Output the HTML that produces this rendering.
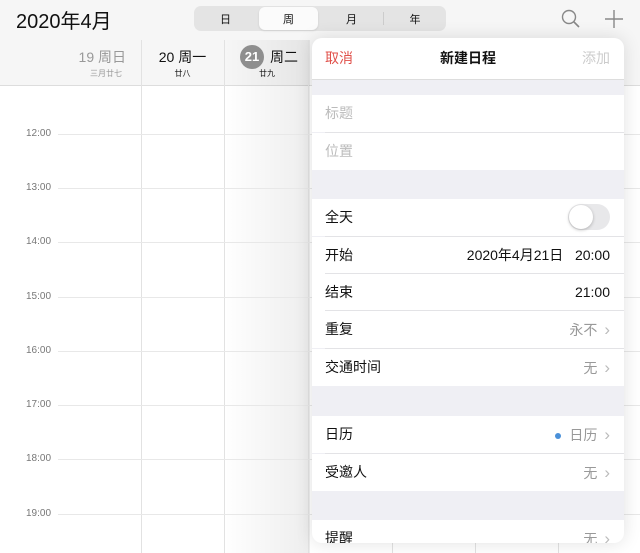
<!DOCTYPE html>
<html><head><meta charset="utf-8"><style>
*{margin:0;padding:0;box-sizing:border-box}
body{width:640px;height:553px;overflow:hidden;background:#fff;font-family:"Liberation Sans","Noto Sans CJK SC",sans-serif;position:relative;color:#111}
.abs{position:absolute}
.top{left:0;top:0;width:640px;height:86px;background:#f6f6f6;border-bottom:1px solid #ddd}
.vl{position:absolute;top:40px;bottom:0;width:1px;background:#e2e2e2}
.hl{position:absolute;left:58px;right:0;height:1px;background:#e8e8e8}
.tm{position:absolute;left:26px;font-size:10px;color:#777;width:30px}
.pop{left:312px;top:38px;width:312px;height:505px;background:#efeff4;border-radius:10px;overflow:hidden;box-shadow:0 0 18px rgba(0,0,0,.12)}
.row{position:absolute;left:0;width:312px;height:37px;background:#fff;font-size:14px;line-height:37px;padding-left:13px}
.row .r{position:absolute;right:14px;top:0;color:#999}
.row .r.b{color:#111}
.sep{position:absolute;left:13px;right:0;height:1px;background:#e3e3e6}
.chev{display:inline-block;margin-left:7px;color:#bbb;font-size:17px}
</style></head><body>
<div class="abs top"></div>
<div class="abs" style="left:16px;top:5px;font-size:20px">2020年4月</div>
<div class="abs" style="left:194px;top:6px;width:252px;height:25px;background:#e4e4e4;border-radius:7px"></div>
<div class="abs" style="left:259px;top:7px;width:59px;height:23px;background:#fbfbfb;border-radius:6px;box-shadow:0 1px 2px rgba(0,0,0,.1)"></div>
<div class="abs" style="left:383px;top:12px;width:1px;height:13px;background:#ccc"></div>
<div class="abs" style="left:194px;top:11px;width:63px;text-align:center;font-size:11px">日</div>
<div class="abs" style="left:259px;top:11px;width:59px;text-align:center;font-size:11px">周</div>
<div class="abs" style="left:320px;top:11px;width:63px;text-align:center;font-size:11px">月</div>
<div class="abs" style="left:384px;top:11px;width:62px;text-align:center;font-size:11px">年</div>
<svg class="abs" style="left:560px;top:8px" width="22" height="22"><circle cx="9" cy="9" r="6.5" fill="none" stroke="#888" stroke-width="1.4"/><line x1="14" y1="14" x2="19" y2="19" stroke="#888" stroke-width="1.6"/></svg>
<svg class="abs" style="left:603px;top:8px" width="22" height="22"><line x1="11" y1="2" x2="11" y2="20" stroke="#888" stroke-width="1.4"/><line x1="2" y1="11" x2="20" y2="11" stroke="#888" stroke-width="1.4"/></svg>
<div class="abs" style="left:224px;top:40px;width:86px;height:513px;background:linear-gradient(90deg,rgba(0,0,0,0),rgba(0,0,0,.07))"></div>
<div class="vl" style="left:141px"></div><div class="vl" style="left:224px"></div><div class="vl" style="left:308px"></div><div class="vl" style="left:392px;top:86px"></div><div class="vl" style="left:475px;top:86px"></div><div class="vl" style="left:558px;top:86px"></div>
<div class="abs" style="left:60px;top:47px;width:66px;text-align:right;font-size:14px;color:#999">19 周日</div>
<div class="abs" style="left:60px;top:68px;width:62px;text-align:right;font-size:8px;color:#999">三月廿七</div>
<div class="abs" style="left:141px;top:47px;width:83px;text-align:center;font-size:14px">20 周一</div>
<div class="abs" style="left:141px;top:68px;width:83px;text-align:center;font-size:8px">廿八</div>
<div class="abs" style="left:240px;top:45px;width:24px;height:24px;border-radius:50%;background:#8e8e8e;color:#fff;font-size:13px;text-align:center;line-height:24px;font-weight:bold">21</div>
<div class="abs" style="left:270px;top:47px;font-size:14px">周二</div>
<div class="abs" style="left:224px;top:68px;width:86px;text-align:center;font-size:8px">廿九</div>
<div class="hl" style="top:134px"></div><div class="tm" style="top:128px">12:00</div>
<div class="hl" style="top:188px"></div><div class="tm" style="top:182px">13:00</div>
<div class="hl" style="top:242px"></div><div class="tm" style="top:236px">14:00</div>
<div class="hl" style="top:297px"></div><div class="tm" style="top:291px">15:00</div>
<div class="hl" style="top:351px"></div><div class="tm" style="top:345px">16:00</div>
<div class="hl" style="top:405px"></div><div class="tm" style="top:399px">17:00</div>
<div class="hl" style="top:459px"></div><div class="tm" style="top:453px">18:00</div>
<div class="hl" style="top:514px"></div><div class="tm" style="top:508px">19:00</div>
<div class="abs pop">
 <div class="row" style="top:0;height:41px;line-height:41px;padding:0">
  <span class="abs" style="left:13px;color:#e0504a">取消</span>
  <span class="abs" style="left:0;width:312px;text-align:center;font-weight:bold">新建日程</span>
  <span class="abs" style="right:14px;color:#ccc">添加</span>
 </div>
 <div class="abs" style="left:0;top:41px;width:312px;height:1px;background:#ddd"></div>
 <div class="row" style="top:57px;color:#bbb">标题</div>
 <div class="sep" style="top:94px"></div>
 <div class="row" style="top:95px;color:#bbb">位置</div>
 <div class="row" style="top:161px">全天<span class="abs" style="right:14px;top:5px;width:42px;height:26px;border-radius:13px;background:#e8e8ea"><span class="abs" style="left:1px;top:1px;width:24px;height:24px;border-radius:50%;background:#fff;box-shadow:0 1px 3px rgba(0,0,0,.25)"></span></span></div>
 <div class="sep" style="top:198px"></div>
 <div class="row" style="top:199px">开始<span class="r b">2020年4月21日&nbsp;&nbsp;&nbsp;20:00</span></div>
 <div class="sep" style="top:235px"></div>
 <div class="row" style="top:236px">结束<span class="r b">21:00</span></div>
 <div class="sep" style="top:272px"></div>
 <div class="row" style="top:273px">重复<span class="r">永不<span class="chev">›</span></span></div>
 <div class="sep" style="top:310px"></div>
 <div class="row" style="top:311px">交通时间<span class="r">无<span class="chev">›</span></span></div>
 <div class="row" style="top:378px">日历<span class="r"><span style="display:inline-block;width:6px;height:6px;border-radius:50%;background:#4a90d9;margin-right:8px;vertical-align:middle"></span>日历<span class="chev">›</span></span></div>
 <div class="sep" style="top:415px"></div>
 <div class="row" style="top:416px">受邀人<span class="r">无<span class="chev">›</span></span></div>
 <div class="row" style="top:482px">提醒<span class="r">无<span class="chev">›</span></span></div>
</div>
</body></html>
